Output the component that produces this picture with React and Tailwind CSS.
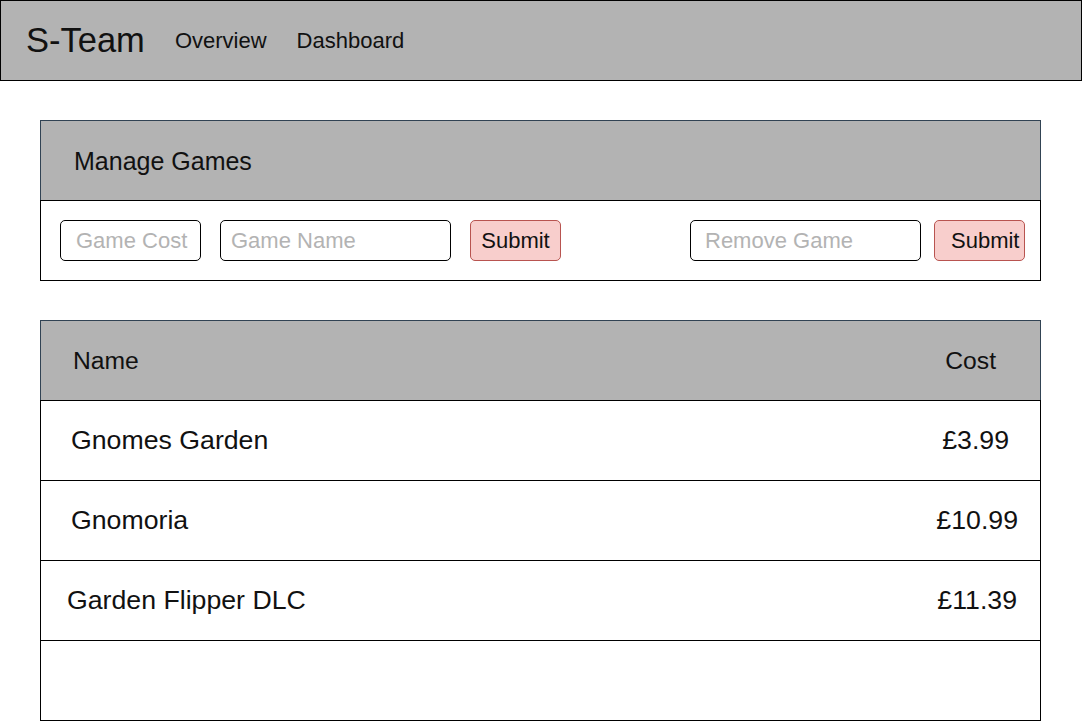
import React from 'react'

const GAMES = [
  { name: "Gnomes Garden", cost: "£3.99", cls: "pl-[30px] pr-[31px]" },
  { name: "Gnomoria", cost: "£10.99", cls: "pl-[30px] pr-[22px]" },
  { name: "Garden Flipper DLC", cost: "£11.39", cls: "pl-[26px] pr-[23px]" },
]

export default function App() {
  return (
    <div className="min-h-screen bg-white text-[#111] font-['Liberation_Sans',Arial,sans-serif]">
      {/* Top bar */}
      <nav className="h-[81px] w-[1082px] bg-[#b3b3b3] border border-black flex items-center pl-[25px]">
        <span className="text-[34.5px] leading-none mr-[30px]">S-Team</span>
        <span className="text-[22px] leading-none mr-[30px]">Overview</span>
        <span className="text-[22px] leading-none">Dashboard</span>
      </nav>

      <main className="px-[40px] pt-[39px] w-[1081px]">
        {/* Manage Games */}
        <section className="w-[1001px]">
          <div className="h-[80px] bg-[#b3b3b3] border-t border-x border-[#314354] flex items-center pl-[33px] pt-[2px]">
            <h2 className="text-[25px] leading-none">Manage Games</h2>
          </div>
          <div className="h-[81px] border border-black flex items-center pl-[19px]">
            <input
              placeholder="Game Cost"
              className="w-[141px] h-[41px] border border-black rounded-[5px] pl-[15px] pr-[1px] text-[22px] placeholder:text-[#b3b3b3] outline-none"
            />
            <input
              placeholder="Game Name"
              className="ml-[19px] w-[231px] h-[41px] border border-black rounded-[5px] px-[10px] text-[22px] placeholder:text-[#b3b3b3] outline-none"
            />
            <button className="ml-[19px] w-[91px] h-[41px] bg-[#f8cecc] border border-[#b85450] rounded-[5px] text-[22px]">
              Submit
            </button>
            <input
              placeholder="Remove Game"
              className="ml-[129px] w-[231px] h-[41px] border border-black rounded-[5px] px-[14px] text-[22px] placeholder:text-[#b3b3b3] outline-none"
            />
            <button className="ml-[13px] w-[91px] h-[41px] bg-[#f8cecc] border border-[#b85450] rounded-[5px] text-[22px] pl-[16px] text-left whitespace-nowrap overflow-hidden">
              Submit
            </button>
          </div>
        </section>

        {/* Games table */}
        <section className="w-[1001px] mt-[39px]">
          <div className="h-[80px] bg-[#b3b3b3] border-t border-x border-[#314354] flex items-center justify-between pl-[32px] pr-[44px] pt-[2px]">
            <span className="text-[24.7px] leading-none">Name</span>
            <span className="text-[24.7px] leading-none">Cost</span>
          </div>
          <div className="border-x border-t border-black">
            {GAMES.map(g => (
              <div key={g.name} className={`h-[80px] border-b border-black flex items-center justify-between ${g.cls}`}>
                <span className="text-[26.7px] leading-none">{g.name}</span>
                <span className="text-[26.7px] leading-none">{g.cost}</span>
              </div>
            ))}
            <div className="h-[80px] border-b border-black" />
          </div>
        </section>
      </main>
    </div>
  )
}
